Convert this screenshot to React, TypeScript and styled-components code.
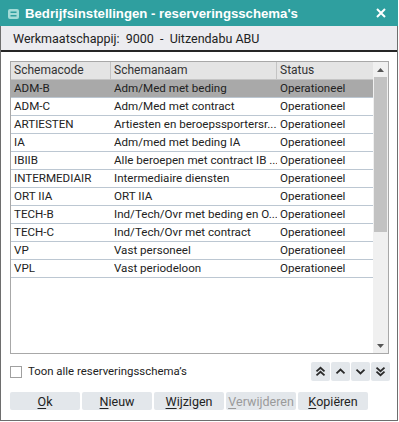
import React from 'react';
import styled, { createGlobalStyle } from 'styled-components';

type Schema = { code: string; name: string; status: string };

const schemas: Schema[] = [
  { code: 'ADM-B', name: 'Adm/Med met beding', status: 'Operationeel' },
  { code: 'ADM-C', name: 'Adm/Med met contract', status: 'Operationeel' },
  { code: 'ARTIESTEN', name: 'Artiesten en beroepssportersr...', status: 'Operationeel' },
  { code: 'IA', name: 'Adm/med met beding IA', status: 'Operationeel' },
  { code: 'IBIIB', name: 'Alle beroepen met contract IB ...', status: 'Operationeel' },
  { code: 'INTERMEDIAIR', name: 'Intermediaire diensten', status: 'Operationeel' },
  { code: 'ORT IIA', name: 'ORT IIA', status: 'Operationeel' },
  { code: 'TECH-B', name: 'Ind/Tech/Ovr met beding en O...', status: 'Operationeel' },
  { code: 'TECH-C', name: 'Ind/Tech/Ovr met contract', status: 'Operationeel' },
  { code: 'VP', name: 'Vast personeel', status: 'Operationeel' },
  { code: 'VPL', name: 'Vast periodeloon', status: 'Operationeel' },
];

const actions = [
  { key: 'O', rest: 'k', disabled: false },
  { key: 'N', rest: 'ieuw', disabled: false },
  { key: 'W', rest: 'ijzigen', disabled: false },
  { key: 'V', rest: 'erwijderen', disabled: true },
  { key: 'K', rest: 'opiëren', disabled: false },
];

const GlobalStyle = createGlobalStyle`
  html, body {
    margin: 0;
    padding: 0;
    background: #fff;
  }
  * {
    box-sizing: border-box;
  }
`;

const App: React.FC = () => {
  return (
    <>
      <GlobalStyle />
      <Window>
        <TitleBar>
          <TitleIcon width="11" height="10" viewBox="0 0 11 10">
            <rect x="0" y="0" width="11" height="10" rx="2" fill="#a3dbd7" />
            <path d="M2.5 3.2H8.5M2.5 6.8H8.5" stroke="#2f9f9f" strokeWidth="1.4" />
          </TitleIcon>
          <Title>Bedrijfsinstellingen - reserveringsschema's</Title>
          <CloseBtn type="button">
            <svg width="10" height="10" viewBox="0 0 10 10">
              <path d="M1 1L9 9M9 1L1 9" stroke="#fff" strokeWidth="2" />
            </svg>
          </CloseBtn>
        </TitleBar>

        <InfoBar>Werkmaatschappij:&nbsp; 9000 &nbsp;- &nbsp;Uitzendabu ABU</InfoBar>

        <Body>
          <ListBox>
            <ListArea>
              <HeaderRow>
                <HeadCell $width={100}>Schemacode</HeadCell>
                <HeadCell $width={166}>Schemanaam</HeadCell>
                <HeadCell $width={96} $last>Status</HeadCell>
              </HeaderRow>
              {schemas.map((s, i) => (
                <Row key={s.code} $selected={i === 0}>
                  <Cell $width={100}>{s.code}</Cell>
                  <Cell $width={166}>{s.name}</Cell>
                  <Cell $width={96}>{s.status}</Cell>
                </Row>
              ))}
            </ListArea>
            <ScrollBar>
              <ScrollArrow>
                <svg width="7" height="4" viewBox="0 0 7 4">
                  <path d="M3.5 0L7 4H0Z" fill="#555" />
                </svg>
              </ScrollArrow>
              <Track>
                <Thumb />
              </Track>
              <ScrollArrow>
                <svg width="7" height="4" viewBox="0 0 7 4">
                  <path d="M0 0H7L3.5 4Z" fill="#555" />
                </svg>
              </ScrollArrow>
            </ScrollBar>
          </ListBox>

          <OptionsRow>
            <CheckLabel>
              <CheckBox />
              Toon alle reserveringsschema’s
            </CheckLabel>
            <MoveGroup>
              <MoveBtn type="button">
                <svg width="11" height="11" viewBox="0 0 11 11">
                  <path d="M1.5 5.4L5.5 1.8L9.5 5.4M1.5 9.4L5.5 5.8L9.5 9.4" stroke="#2a2a2a" strokeWidth="1.8" fill="none" />
                </svg>
              </MoveBtn>
              <MoveBtn type="button">
                <svg width="11" height="11" viewBox="0 0 11 11">
                  <path d="M1.5 7.4L5.5 3.6L9.5 7.4" stroke="#2a2a2a" strokeWidth="1.8" fill="none" />
                </svg>
              </MoveBtn>
              <MoveBtn type="button">
                <svg width="11" height="11" viewBox="0 0 11 11">
                  <path d="M1.5 3.6L5.5 7.4L9.5 3.6" stroke="#2a2a2a" strokeWidth="1.8" fill="none" />
                </svg>
              </MoveBtn>
              <MoveBtn type="button">
                <svg width="11" height="11" viewBox="0 0 11 11">
                  <path d="M1.5 1.6L5.5 5.2L9.5 1.6M1.5 5.6L5.5 9.2L9.5 5.6" stroke="#2a2a2a" strokeWidth="1.8" fill="none" />
                </svg>
              </MoveBtn>
            </MoveGroup>
          </OptionsRow>

          <ButtonRow>
            {actions.map((a) => (
              <ActionBtn key={a.key} type="button" $disabled={a.disabled}>
                <u>{a.key}</u>
                {a.rest}
              </ActionBtn>
            ))}
          </ButtonRow>
        </Body>
      </Window>
    </>
  );
};

export default App;

const Window = styled.div`
  width: 398px;
  height: 421px;
  border: 1px solid #6e6e6e;
  border-top: none;
  display: flex;
  flex-direction: column;
  background: #fff;
  font-family: Roboto, 'Liberation Sans', sans-serif;
`;

const TitleBar = styled.div`
  height: 26px;
  background: #2f9f9f;
  display: flex;
  align-items: center;
  padding: 0 8px 0 8px;
  margin: 0 -1px;
`;

const TitleIcon = styled.svg`
  flex: none;
  margin-top: 1px;
`;

const Title = styled.div`
  flex: 1;
  margin-left: 6px;
  color: #fff;
  font-family: 'Liberation Sans', Arial, sans-serif;
  font-weight: 700;
  font-size: 13.2px;
  white-space: nowrap;
`;

const CloseBtn = styled.button`
  border: none;
  background: transparent;
  padding: 0;
  width: 12px;
  height: 12px;
  display: flex;
  align-items: center;
  justify-content: center;
  margin-right: 3px;
`;

const InfoBar = styled.div`
  height: 26px;
  background: #ececf0;
  border-bottom: 2px solid #262626;
  padding: 1px 0 0 12px;
  display: flex;
  align-items: center;
  font-size: 12.5px;
  color: #222;
  white-space: nowrap;
`;

const Body = styled.div`
  flex: 1;
  display: flex;
  flex-direction: column;
  padding: 9px 8px 0 9px;
`;

const ListBox = styled.div`
  width: 379px;
  height: 293px;
  border: 1px solid #a8a8a8;
  display: flex;
`;

const ListArea = styled.div`
  flex: 1;
  display: flex;
  flex-direction: column;
`;

const HeaderRow = styled.div`
  display: flex;
  height: 18px;
  background: #e4e4e4;
  border-bottom: 1px solid #c4c4c4;
`;

const HeadCell = styled.div<{ $width: number; $last?: boolean }>`
  width: ${(p) => p.$width}px;
  padding-left: 3px;
  font-size: 12px;
  color: #333;
  line-height: 17px;
  border-right: ${(p) => (p.$last ? 'none' : '1px solid #c4c4c4')};
  white-space: nowrap;
`;

const Row = styled.div<{ $selected: boolean }>`
  display: flex;
  height: 18px;
  background: ${(p) => (p.$selected ? '#a9a9a9' : '#fff')};
  border-bottom: 1px solid #bcc7d2;
`;

const Cell = styled.div<{ $width: number }>`
  width: ${(p) => p.$width}px;
  padding-left: 3px;
  font-size: 11.6px;
  color: #222;
  line-height: 17px;
  white-space: nowrap;
  overflow: hidden;
`;

const ScrollBar = styled.div`
  width: 15px;
  background: #f0f0f0;
  display: flex;
  flex-direction: column;
`;

const ScrollArrow = styled.div`
  height: 15px;
  display: flex;
  align-items: center;
  justify-content: center;
`;

const Track = styled.div`
  flex: 1;
  display: flex;
  flex-direction: column;
`;

const Thumb = styled.div`
  height: 155px;
  background: #c2c2c2;
  margin: 0 1px 0 1px;
`;

const OptionsRow = styled.div`
  display: flex;
  align-items: center;
  justify-content: space-between;
  margin-top: 7px;
  height: 20px;
  margin-right: -1px;
`;

const CheckLabel = styled.label`
  display: flex;
  align-items: center;
  gap: 6px;
  font-size: 11.4px;
  color: #222;
  white-space: nowrap;
`;

const CheckBox = styled.span`
  width: 12px;
  height: 12px;
  border: 1px solid #a0a0a0;
  background: #fff;
  display: inline-block;
  margin-top: 1px;
`;

const MoveGroup = styled.div`
  display: flex;
  gap: 1px;
`;

const MoveBtn = styled.button`
  width: 19px;
  height: 19px;
  padding: 0;
  border: none;
  border-radius: 2px;
  background: #e3e7eb;
  display: flex;
  align-items: center;
  justify-content: center;
`;

const ButtonRow = styled.div`
  display: flex;
  gap: 2px;
  margin-top: 11px;
`;

const ActionBtn = styled.button<{ $disabled: boolean }>`
  width: 70px;
  height: 18px;
  padding: 0;
  border: none;
  border-radius: 2px;
  background: #e3e7eb;
  font-family: Roboto, 'Liberation Sans', sans-serif;
  font-size: 12.5px;
  color: ${(p) => (p.$disabled ? '#9a9a9a' : '#222')};
  display: flex;
  align-items: center;
  justify-content: center;

  u {
    text-underline-offset: 2px;
  }
`;
